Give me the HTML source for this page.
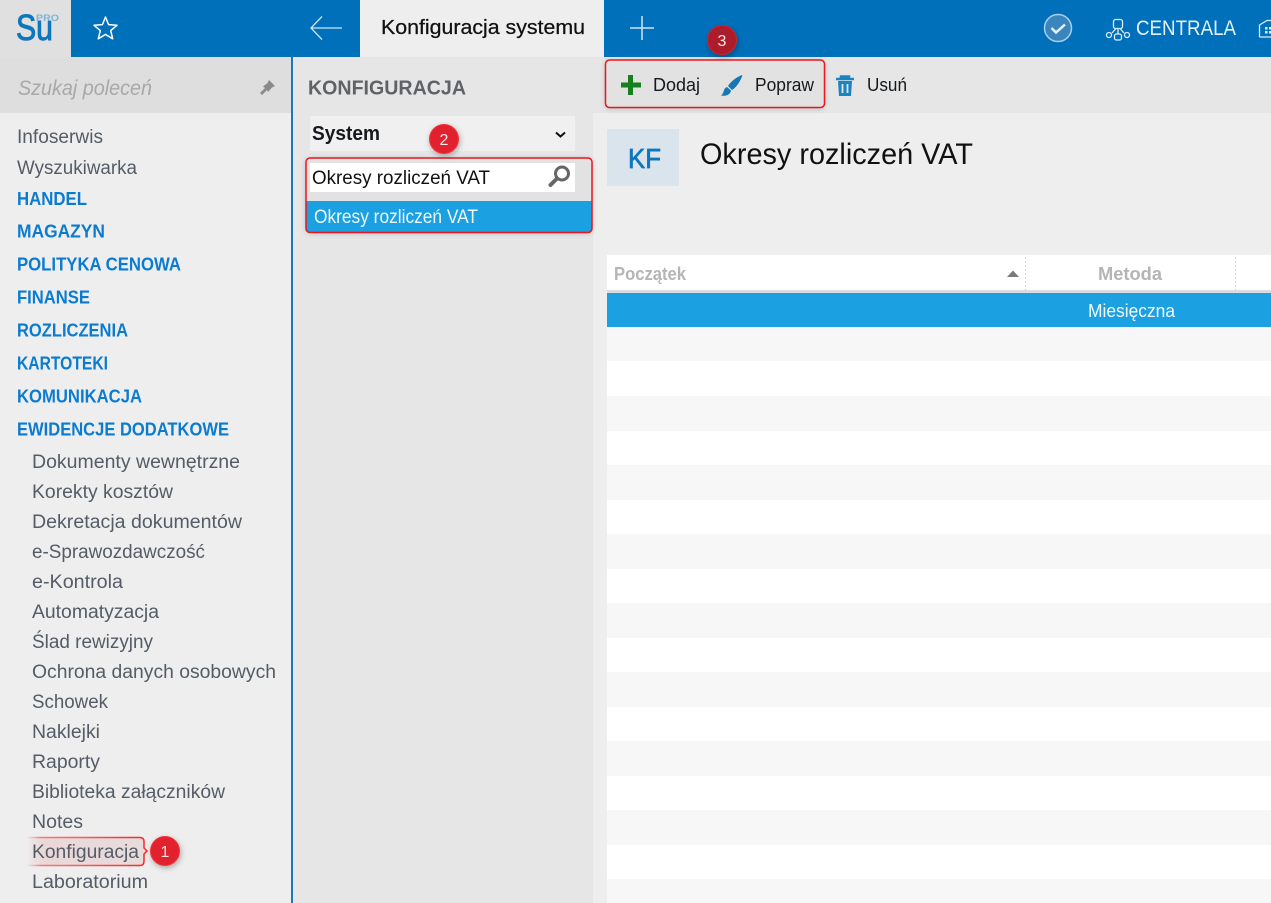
<!DOCTYPE html>
<html lang="pl"><head><meta charset="utf-8"><title>Konfiguracja systemu</title>
<style>
html,body{margin:0;padding:0;background:#eee;width:1271px;height:903px;overflow:hidden}
svg{display:block;font-family:"Liberation Sans",sans-serif}
.a{font-size:19px;fill:#555c66}
.b{font-size:18.5px;font-weight:bold;fill:#0b7bd0}
.s{font-size:19px;fill:#555c66}
.n{font-size:16px;fill:#fbe5e5;text-anchor:middle}
</style></head><body>
<svg width="1271" height="903" viewBox="0 0 1271 903" xmlns="http://www.w3.org/2000/svg">
<defs>
<filter id="sh" x="-30%" y="-30%" width="160%" height="160%"><feDropShadow dx="1" dy="2" stdDeviation="3" flood-color="#000" flood-opacity=".3"/></filter>
<filter id="sh2" x="-10%" y="-30%" width="120%" height="160%"><feDropShadow dx="0" dy="1" stdDeviation="3" flood-color="#000" flood-opacity=".22"/></filter>
<linearGradient id="fade" x1="0" x2="1" y1="0" y2="0"><stop offset="0" stop-color="#f44" stop-opacity="0"/><stop offset=".12" stop-color="#f33" stop-opacity=".6"/><stop offset="1" stop-color="#f22"/></linearGradient>
<linearGradient id="fadefill" x1="0" x2="1" y1="0" y2="0"><stop offset="0" stop-color="#e8d0d0" stop-opacity="0"/><stop offset=".15" stop-color="#ead8d8"/><stop offset="1" stop-color="#e6dcdc"/></linearGradient>
</defs>
<rect width="1271" height="903" fill="#eeeeee"/>
<!-- header -->
<rect width="1271" height="57" fill="#0070bb"/>
<rect width="71" height="57" fill="#e0e0e0"/>
<text x="16" y="40" font-size="36" fill="#0f76bd" stroke="#0f76bd" stroke-width="1" textLength="37" lengthAdjust="spacingAndGlyphs">Su</text>
<text x="36" y="21" font-size="9" font-weight="bold" fill="#7cb3d8" textLength="23" lengthAdjust="spacingAndGlyphs">PRO</text>
<path d="M105.500 17 L108.600 24.600 L117 25.300 L110.700 30.600 L112.700 38.800 L105.500 34.400 L98.300 38.800 L100.300 30.600 L94 25.300 L102.400 24.600 Z" fill="none" stroke="#fff" stroke-width="1.500" stroke-linejoin="round"/>
<path d="M342 28 H311 M322 16.500 L311 28 L322 39.500" fill="none" stroke="#cfe4f3" stroke-width="1.300"/>
<rect x="360" width="244" height="57" fill="#eeeeee"/>
<text x="381" y="34" font-size="20" fill="#111" stroke="#111" stroke-width=".25" textLength="204" lengthAdjust="spacingAndGlyphs">Konfiguracja systemu</text>
<path d="M630 28 H654 M642 16 V40" stroke="#cfe4f3" stroke-width="1.500" fill="none"/>
<circle cx="1058" cy="28" r="13.500" fill="#3b85bf" stroke="#a8cde6" stroke-width="1.500"/>
<path d="M1051.500 28 L1056 32.500 L1065 24.500" fill="none" stroke="#e5f0f8" stroke-width="2.500"/>
<g fill="none" stroke="#dcecf7" stroke-width="1.300">
<rect x="1113.500" y="19.500" width="9" height="9" rx="2"/>
<path d="M1116 28.500 L1112 33 M1120 28.500 L1124 33 M1118 29 V34"/>
<circle cx="1109" cy="35" r="2.500"/><circle cx="1127" cy="35" r="2.500"/><rect x="1114.500" y="34" width="7" height="6" rx="2"/>
</g>
<text x="1136" y="35" font-size="21" fill="#e3f0f9" textLength="100" lengthAdjust="spacingAndGlyphs">CENTRALA</text>
<path d="M1259.500 37 V25 L1267 20.500 H1271 M1259.500 37 H1271" fill="none" stroke="#dcecf7" stroke-width="1.300"/>
<rect x="1265" y="27" width="2.500" height="2.500" fill="#dcecf7"/><rect x="1269" y="27" width="2" height="2.500" fill="#dcecf7"/><rect x="1265" y="31" width="2.500" height="2.500" fill="#dcecf7"/><rect x="1269" y="31" width="2" height="2.500" fill="#dcecf7"/>
<!-- sidebar -->
<rect y="57" width="291" height="56" fill="#dedede"/>
<text x="18" y="95" font-size="21" font-style="italic" fill="#a8a8a8" textLength="134" lengthAdjust="spacingAndGlyphs">Szukaj poleceń</text>
<path d="M269 80 L275 86 L272 87.500 L268 92 L267 90 L262 95 L260 93 L265 88 L263 86.500 L267.500 83 Z" fill="#8a8a8a"/>
<rect x="291" y="57" width="2" height="846" fill="#1c78b8"/>
<text class="a" x="17" y="143" textLength="86" lengthAdjust="spacingAndGlyphs">Infoserwis</text>
<text class="a" x="17" y="174" textLength="120" lengthAdjust="spacingAndGlyphs">Wyszukiwarka</text>
<text class="b" x="17" y="205" textLength="70" lengthAdjust="spacingAndGlyphs">HANDEL</text>
<text class="b" x="17" y="237.500" textLength="88" lengthAdjust="spacingAndGlyphs">MAGAZYN</text>
<text class="b" x="17" y="270.500" textLength="164" lengthAdjust="spacingAndGlyphs">POLITYKA CENOWA</text>
<text class="b" x="17" y="303.500" textLength="73" lengthAdjust="spacingAndGlyphs">FINANSE</text>
<text class="b" x="17" y="336.500" textLength="111" lengthAdjust="spacingAndGlyphs">ROZLICZENIA</text>
<text class="b" x="17" y="369.500" textLength="91" lengthAdjust="spacingAndGlyphs">KARTOTEKI</text>
<text class="b" x="17" y="402.500" textLength="125" lengthAdjust="spacingAndGlyphs">KOMUNIKACJA</text>
<text class="b" x="17" y="435.500" textLength="212" lengthAdjust="spacingAndGlyphs">EWIDENCJE DODATKOWE</text>
<text class="s" x="32" y="468" textLength="208" lengthAdjust="spacingAndGlyphs">Dokumenty wewnętrzne</text>
<text class="s" x="32" y="498" textLength="141" lengthAdjust="spacingAndGlyphs">Korekty kosztów</text>
<text class="s" x="32" y="528" textLength="210" lengthAdjust="spacingAndGlyphs">Dekretacja dokumentów</text>
<text class="s" x="32" y="558" textLength="173" lengthAdjust="spacingAndGlyphs">e-Sprawozdawczość</text>
<text class="s" x="32" y="588" textLength="91" lengthAdjust="spacingAndGlyphs">e-Kontrola</text>
<text class="s" x="32" y="618" textLength="127" lengthAdjust="spacingAndGlyphs">Automatyzacja</text>
<text class="s" x="32" y="648" textLength="121" lengthAdjust="spacingAndGlyphs">Ślad rewizyjny</text>
<text class="s" x="32" y="678" textLength="244" lengthAdjust="spacingAndGlyphs">Ochrona danych osobowych</text>
<text class="s" x="32" y="708" textLength="76" lengthAdjust="spacingAndGlyphs">Schowek</text>
<text class="s" x="32" y="738" textLength="68" lengthAdjust="spacingAndGlyphs">Naklejki</text>
<text class="s" x="32" y="768" textLength="68" lengthAdjust="spacingAndGlyphs">Raporty</text>
<text class="s" x="32" y="798" textLength="193" lengthAdjust="spacingAndGlyphs">Biblioteka załączników</text>
<text class="s" x="32" y="828" textLength="51" lengthAdjust="spacingAndGlyphs">Notes</text>
<path d="M26 837.500 H140 Q144 837.500 144 841.500 V848 L147 851 L144 854 V861 Q144 865.500 140 865.500 H26 Z" fill="url(#fadefill)"/>
<path d="M26 837.500 H140 Q144 837.500 144 841.500 V848 L147 851 L144 854 V861 Q144 865.500 140 865.500 H26" fill="none" stroke="url(#fade)" stroke-width="1.500"/>
<text class="s" x="32" y="858" textLength="107" lengthAdjust="spacingAndGlyphs">Konfiguracja</text>
<text class="s" x="32" y="888" textLength="116" lengthAdjust="spacingAndGlyphs">Laboratorium</text>
<circle cx="165" cy="851" r="14.500" fill="#e1242e" stroke="#f5333a" filter="url(#sh)"/>
<text class="n" x="165" y="857">1</text>
<!-- middle panel -->
<rect x="293" y="57" width="300" height="846" fill="#e6e6e6"/>
<text x="308" y="94.500" font-size="20" font-weight="bold" fill="#5f6266" textLength="158" lengthAdjust="spacingAndGlyphs">KONFIGURACJA</text>
<rect x="310" y="116" width="265" height="35" fill="#f0f0f0"/>
<text x="312" y="140" font-size="20" font-weight="bold" fill="#15181c" textLength="68" lengthAdjust="spacingAndGlyphs">System</text>
<path d="M556 132.500 L560.500 136.500 L565 132.500" fill="none" stroke="#111" stroke-width="2"/>
<rect x="306" y="158" width="286" height="74" rx="4" fill="#e2e2e2" filter="url(#sh2)"/>
<rect x="310" y="163" width="265" height="29" fill="#fff"/>
<text x="312" y="184" font-size="19.500" fill="#111" textLength="178" lengthAdjust="spacingAndGlyphs">Okresy rozliczeń VAT</text>
<circle cx="562" cy="173.500" r="6.500" fill="none" stroke="#666" stroke-width="3"/>
<path d="M556.500 179 L550.500 185" stroke="#666" stroke-width="4" stroke-linecap="round"/>
<rect x="306.500" y="201" width="285" height="31" fill="#1ba0e2"/>
<text x="314" y="223" font-size="19" fill="#eef8fe" textLength="164" lengthAdjust="spacingAndGlyphs">Okresy rozliczeń VAT</text>
<rect x="306" y="158" width="286" height="74.500" rx="4" fill="none" stroke="#e8161e" stroke-width="1.500"/>
<circle cx="444" cy="139" r="14.500" fill="#e1242e" stroke="#f5333a" filter="url(#sh)"/>
<text class="n" x="444" y="145">2</text>
<!-- toolbar -->
<rect x="593" y="57" width="678" height="56" fill="#e6e6e6"/>
<rect x="605.500" y="60" width="219" height="47.500" rx="4" fill="#e2e2e2" filter="url(#sh2)"/>
<rect x="605.500" y="60" width="219" height="47.500" rx="4" fill="none" stroke="#e8161e" stroke-width="1.500"/>
<path d="M630.500 75 V95 M621 85 H641" stroke="#167f1e" stroke-width="5" fill="none"/>
<text x="653" y="91" font-size="18.500" fill="#15181c" textLength="47" lengthAdjust="spacingAndGlyphs">Dodaj</text>
<path d="M742.500 75 C738 76 731 81 728 86 L732 90 C737 87 741 80 742.500 75 Z M727 87 C724 88 724 91 723 93 C722 95 721 95.500 721 95.500 C725 96.500 730.500 95 731 90.500 Z" fill="#1578b4"/>
<text x="755" y="91" font-size="18.500" fill="#15181c" textLength="59" lengthAdjust="spacingAndGlyphs">Popraw</text>
<path d="M836 79 H854 M841 79 V76.500 H849 V79" fill="none" stroke="#1a84c1" stroke-width="2.500"/>
<path d="M838 81 H852 L851 96 H839 Z" fill="#1a84c1"/>
<path d="M842.500 84 V93 M847.500 84 V93" stroke="#e6e6e6" stroke-width="1.800"/>
<text x="867" y="91" font-size="18.500" fill="#15181c" textLength="40" lengthAdjust="spacingAndGlyphs">Usuń</text>
<circle cx="722" cy="40" r="14.500" fill="#ad1a2a" stroke="#d4202c" filter="url(#sh)"/>
<text class="n" x="722" y="46">3</text>
<!-- content -->
<rect x="607" y="129" width="72" height="57" fill="#d9e4ec"/>
<text x="628" y="168" font-size="28" fill="#0f76bd" stroke="#0f76bd" stroke-width=".7" textLength="33" lengthAdjust="spacingAndGlyphs">KF</text>
<text x="700" y="164" font-size="30" fill="#111" textLength="273" lengthAdjust="spacingAndGlyphs">Okresy rozliczeń VAT</text>
<rect x="607" y="255" width="664" height="35" fill="#fff"/>
<rect x="607" y="290" width="664" height="3" fill="#dcdcdc"/>
<text x="614" y="280" font-size="18" font-weight="bold" fill="#b5b5b5" textLength="72" lengthAdjust="spacingAndGlyphs">Początek</text>
<path d="M1007 277 L1013 270.500 L1019 277 Z" fill="#7a7a7a"/>
<path d="M1025.500 257 V292 M1235.500 257 V292" stroke="#d0d0d0" stroke-dasharray="1.500 2.500"/>
<text x="1098" y="280" font-size="18" font-weight="bold" fill="#b5b5b5" textLength="64" lengthAdjust="spacingAndGlyphs">Metoda</text>
<rect x="607" y="293" width="664" height="34" fill="#1ba0e2"/>
<text x="1088" y="317" font-size="18" fill="#f2fafe" textLength="87" lengthAdjust="spacingAndGlyphs">Miesięczna</text>
<rect x="607" y="327" width="664" height="576" fill="#fff"/>
<g fill="#f7f7f7">
<rect x="607" y="327" width="664" height="34"/>
<rect x="607" y="396" width="664" height="35"/>
<rect x="607" y="465" width="664" height="35"/>
<rect x="607" y="534" width="664" height="35"/>
<rect x="607" y="603" width="664" height="35"/>
<rect x="607" y="672" width="664" height="35"/>
<rect x="607" y="741" width="664" height="35"/>
<rect x="607" y="810" width="664" height="35"/>
<rect x="607" y="879" width="664" height="24"/>
</g>
</svg>
</body></html>
